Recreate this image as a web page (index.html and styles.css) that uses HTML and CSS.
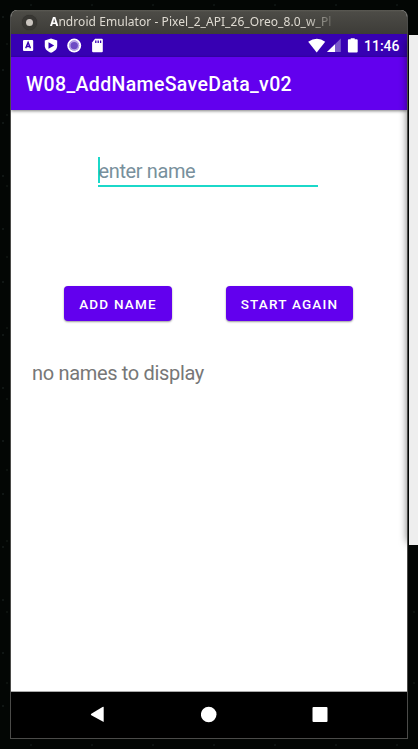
FILE: index.html
```html
<!DOCTYPE html>
<html lang="en">
<head>
<meta charset="utf-8">
<title>Android Emulator</title>
<link rel="stylesheet" href="styles.css">
</head>
<body>
<div class="back-window"></div>
<main class="emulator">
  <header class="titlebar">
    <span class="window-button"></span>
    <span class="window-title"><b>A</b>ndroid Emulator - Pixel_2_API_26_Oreo_8.0_w_Pl</span>
  </header>
  <div class="statusbar">
    <svg class="notifications" width="82" height="16" viewBox="0 0 82 16">
      <rect x="1" y="2" width="10.2" height="11" rx="1" fill="#fff"/>
      <path d="M3.7 10.2 6.1 4.4 8.5 10.2M4.6 8.500h3" fill="none" stroke="#3700b3" stroke-width="1.4"/>
      <path d="M29 .5 35.200 2.500v5.200c0 3.500-2.500 5.600-6.200 7.100-3.700-1.500-6.200-3.600-6.200-7.100V2.500z" fill="#fff"/>
      <path d="M26.500 4.300v6.400l5.700-3.200z" fill="#3700b3"/>
      <circle cx="52.200" cy="7.600" r="6" fill="#6d4bc4" stroke="#fff" stroke-width="2"/>
      <circle cx="52.200" cy="7.600" r="4.400" fill="none" stroke="#b9a6e8" stroke-width="1.400"/>
      <path d="M73 .7h6.800a1 1 0 0 1 1 1v11.600a1 1 0 0 1-1 1h-8.700a1 1 0 0 1-1-1V4.500z" fill="#fff"/>
      <path d="M73.800 2.500V5M76.200 2.500V5M78.600 2.500V5" stroke="#3700b3" stroke-width="1.300"/>
    </svg>
    <svg class="system-icons" width="52" height="16" viewBox="0 0 52 16">
      <path d="M.2 3.700Q9-2 17.200 3.700L8.700 14.500z" fill="#fff"/>
      <path d="M19 14.100 32.800.5v13.600z" fill="#7b59cb"/>
      <path d="M19 14.100 27 6.200v7.900z" fill="#fff"/>
      <path d="M42.700.2h4v1h2a1 1 0 0 1 1 1v11.200a1 1 0 0 1-1 1h-7.800a1 1 0 0 1-1-1V2.200a1 1 0 0 1 1-1h1.800z" fill="#fff"/>
    </svg>
    <span class="clock">11:46</span>
  </div>
  <div class="appbar"><h1>W08_AddNameSaveData_v02</h1></div>
  <section class="content">
    <div class="name-field"><span class="hint">enter name</span></div>
    <div class="actions">
      <button class="add">ADD NAME</button>
      <button class="reset">START AGAIN</button>
    </div>
    <p class="names">no names to display</p>
  </section>
  <nav class="navbar">
    <svg width="16" height="18" viewBox="0 0 16 18"><path d="M13.700 1.100v14.800L1.300 9.200q-1-.7 0-1.400L12.500 1q1.200-.7 1.200.1z" fill="#fff"/></svg>
    <svg width="16" height="18" viewBox="0 0 16 18"><circle cx="7.700" cy="8.500" r="7.800" fill="#fff"/></svg>
    <svg width="16" height="18" viewBox="0 0 16 18"><rect x=".5" y="1" width="15" height="15" rx="1" fill="#fff"/></svg>
  </nav>
</main>
</body>
</html>
```
FILE: styles.css
```css
* { box-sizing: border-box; }
body {
  margin: 0;
  height: 749px;
  overflow: hidden;
  padding: 10px 0 0 10px;
  background-color: #030604;
  background-image:
    radial-gradient(circle at 3px 17px, #1a221f 0 .5px, transparent 1px),
    radial-gradient(circle at 31px 5px, #141c19 0 .5px, transparent 1px),
    radial-gradient(circle at 7px 44px, #141b15 0 .5px, transparent 1px);
  background-size: 43px 53px, 61px 37px, 37px 71px;
  font-family: Roboto, sans-serif;
}
.back-window {
  position: absolute;
  left: 409px;
  top: 35px;
  width: 9px;
  height: 510px;
  background: #eee;
}
.emulator {
  position: relative;
  display: flex;
  flex-direction: column;
  width: 398px;
  height: 729px;
  border: 1px solid #4b4b49;
  border-top: 0;
  border-radius: 7px 7px 0 0;
  background: #fff;
  overflow: hidden;
}
/* shade cast by the neighbouring window */
.emulator::after {
  content: "";
  position: absolute;
  right: -9px;
  top: 30px;
  width: 8px;
  height: 502px;
  box-shadow: 0 0 9px rgba(0, 0, 0, .65);
}
.titlebar {
  flex: 0 0 24px;
  display: flex;
  align-items: center;
  padding-left: 11px;
  background: linear-gradient(#5b5a54, #4c4b46 2px, #3d3c38);
}
.window-button {
  width: 15px;
  height: 15px;
  border: 4px solid #383733;
  border-radius: 50%;
  background: #cbc6c0;
  box-shadow: 0 0 1px #282724;
}
.window-title {
  margin-left: 13px;
  width: 290px;
  color: #dfdbd2;
  font: 12px/24px "Noto Sans", sans-serif;
  letter-spacing: .06px;
  white-space: nowrap;
  -webkit-mask-image: linear-gradient(90deg, #000 255px, transparent 290px);
  mask-image: linear-gradient(90deg, #000 255px, transparent 290px);
}
.window-title b { color: #fff; }
.statusbar {
  flex: none;
  height: 23px;
  display: flex;
  align-items: center;
  padding: 0 8px 0 11px;
  background: #3700b3;
}
.notifications { margin-left: -.5px; }
.system-icons { margin-left: auto; }
.clock {
  margin-left: 4px;
  width: 35px;
  color: #fff;
  font-size: 14px;
  font-weight: 500;
  line-height: 22px;
  padding-top: 1px;
}
.appbar {
  flex: none;
  height: 53px;
  position: relative;
  padding-left: 15px;
  background: #6200ee;
  box-shadow: 0 1px 3px rgba(0, 0, 0, .5);
}
h1 {
  margin: 0;
  color: #fff;
  font-size: 19.500px;
  font-weight: 500;
  letter-spacing: .36px;
  line-height: 56px;
}
.content {
  flex: 1;
  border-bottom: 1px solid #aaa;
}
.name-field {
  width: 220px;
  height: 30px;
  margin: 47px 0 0 87px;
  border-bottom: 2px solid #1bd8c9;
}
.hint {
  display: block;
  height: 26px;
  border-left: 2px solid #1bd8c9;
  color: #78909c;
  font-size: 20px;
  letter-spacing: -.38px;
  line-height: 28px;
  text-indent: -1.500px;
}
.actions {
  display: flex;
  gap: 54px;
  margin: 99px 0 0 53px;
}
button {
  height: 35px;
  padding: 1px 0 0;
  border: 0;
  border-radius: 4px;
  background: #6200ee;
  box-shadow: 0 1px 2px rgba(0, 0, 0, .4);
  color: #fff;
  font: 500 13.500px/34px Roboto, sans-serif;
  letter-spacing: 1.200px;
}
.add { width: 108px; }
.reset { width: 127px; }
.names {
  margin: 38px 0 0 21px;
  color: #777;
  font-size: 20px;
  letter-spacing: -.33px;
  line-height: 28px;
}
.navbar {
  flex: 0 0 46px;
  display: flex;
  align-items: center;
  gap: 95px;
  padding-left: 79px;
  background: #000;
}
```
